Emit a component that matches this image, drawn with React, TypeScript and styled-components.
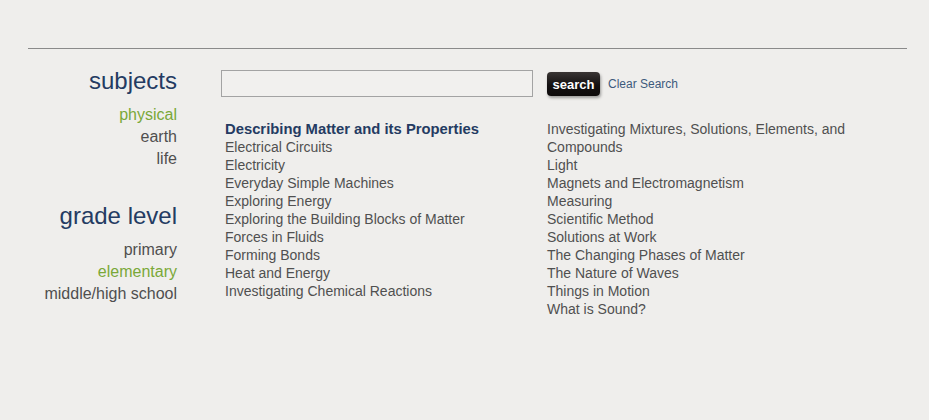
import styled, { createGlobalStyle } from 'styled-components';

const GlobalStyles = createGlobalStyle`
  html, body {
    margin: 0;
    padding: 0;
    background: #efeeec;
  }

  body {
    font-family: 'Liberation Sans', Arial, sans-serif;
    color: #555;
  }
`;

const Page = styled.div`
  min-height: 420px;
  padding: 48px 22px 0 28px;
  box-sizing: border-box;
`;

const Rule = styled.hr`
  margin: 0;
  border: 0;
  border-top: 1px solid #8a8a8a;
`;

const Main = styled.main`
  display: flex;
  align-items: flex-start;
`;

const Sidebar = styled.nav`
  width: 149px;
  flex: 0 0 auto;
  margin-top: 18px;
  text-align: right;
`;

const Heading = styled.h2<{ $spaced?: boolean }>`
  margin: ${(p) => (p.$spaced ? '32px' : '0')} 0 9px;
  font-size: 24px;
  line-height: 28px;
  font-weight: 400;
  color: #243b62;
`;

const FilterList = styled.ul`
  margin: 0;
  padding: 0;
  list-style: none;
`;

const Filter = styled.li<{ $active?: boolean }>`
  font-size: 16px;
  line-height: 22px;
  color: ${(p) => (p.$active ? '#7aa838' : '#4f4f4f')};
`;

const Content = styled.div`
  margin-left: 44px;
  padding-top: 21px;
  flex: 1 1 auto;
`;

const SearchRow = styled.form`
  display: flex;
  align-items: center;
`;

const SearchInput = styled.input`
  width: 312px;
  height: 27px;
  box-sizing: border-box;
  margin: 0;
  border: 1px solid #a3a3a3;
  background: #f1f0ee;
  outline: none;
`;

const SearchButton = styled.button`
  margin-left: 14px;
  width: 53px;
  height: 24px;
  margin-top: 1px;
  padding: 0;
  border: 0;
  border-radius: 4px;
  background: linear-gradient(#3a3534, #141111 55%, #0d0a0a);
  box-shadow: 1px 2px 3px rgba(0, 0, 0, 0.35);
  color: #fff;
  font-family: 'Liberation Sans', Arial, sans-serif;
  font-size: 13px;
  font-weight: 700;
`;

const ClearLink = styled.a`
  margin-left: 8px;
  margin-top: 1px;
  font-size: 12px;
  color: #3d5a7c;
  text-decoration: none;
`;

const Topics = styled.div`
  display: grid;
  grid-template-columns: 322px 322px;
  margin-top: 23px;
  padding-left: 4px;
`;

const TopicList = styled.ul`
  margin: 0;
  padding: 0;
  list-style: none;
`;

const Topic = styled.li<{ $current?: boolean }>`
  font-size: ${(p) => (p.$current ? '14.8px' : '14px')};
  font-weight: ${(p) => (p.$current ? 700 : 400)};
  line-height: 18px;
  color: ${(p) => (p.$current ? '#243b62' : '#505050')};
`;

const subjects = [
  { label: 'physical', active: true },
  { label: 'earth' },
  { label: 'life' },
];

const grades = [
  { label: 'primary' },
  { label: 'elementary', active: true },
  { label: 'middle/high school' },
];

const leftTopics = [
  'Describing Matter and its Properties',
  'Electrical Circuits',
  'Electricity',
  'Everyday Simple Machines',
  'Exploring Energy',
  'Exploring the Building Blocks of Matter',
  'Forces in Fluids',
  'Forming Bonds',
  'Heat and Energy',
  'Investigating Chemical Reactions',
];

const rightTopics = [
  'Investigating Mixtures, Solutions, Elements, and Compounds',
  'Light',
  'Magnets and Electromagnetism',
  'Measuring',
  'Scientific Method',
  'Solutions at Work',
  'The Changing Phases of Matter',
  'The Nature of Waves',
  'Things in Motion',
  'What is Sound?',
];

export default function App() {
  return (
    <>
      <GlobalStyles />
      <Page>
        <Rule />
        <Main>
          <Sidebar>
            <Heading>subjects</Heading>
            <FilterList>
              {subjects.map((s) => (
                <Filter key={s.label} $active={s.active}>
                  {s.label}
                </Filter>
              ))}
            </FilterList>

            <Heading $spaced>grade level</Heading>
            <FilterList>
              {grades.map((g) => (
                <Filter key={g.label} $active={g.active}>
                  {g.label}
                </Filter>
              ))}
            </FilterList>
          </Sidebar>

          <Content>
            <SearchRow onSubmit={(e) => e.preventDefault()}>
              <SearchInput type="text" />
              <SearchButton type="submit">search</SearchButton>
              <ClearLink href="#">Clear Search</ClearLink>
            </SearchRow>

            <Topics>
              <TopicList>
                {leftTopics.map((t, i) => (
                  <Topic key={t} $current={i === 0}>
                    {t}
                  </Topic>
                ))}
              </TopicList>
              <TopicList>
                {rightTopics.map((t) => (
                  <Topic key={t}>{t}</Topic>
                ))}
              </TopicList>
            </Topics>
          </Content>
        </Main>
      </Page>
    </>
  );
}
